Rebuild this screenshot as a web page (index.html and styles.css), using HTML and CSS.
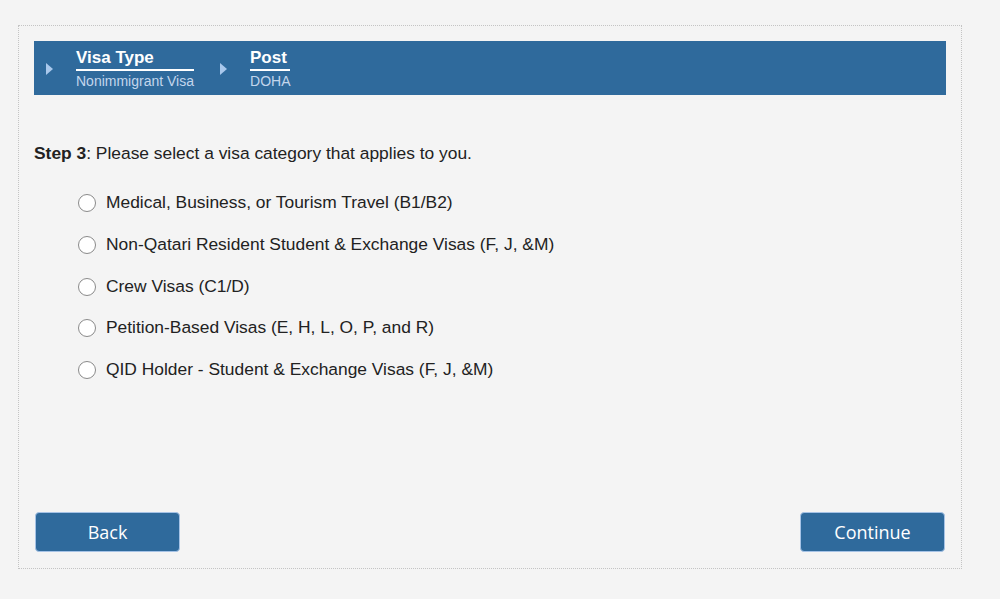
FILE: index.html
```html
<!DOCTYPE html>
<html lang="en">
<head>
    <meta charset="UTF-8">
    <meta name="viewport" content="width=device-width, initial-scale=1.0">
    <title>Visa Category</title>
    <link rel="stylesheet" href="styles.css">
</head>
<body>
    <div class="wizard">
        <div class="crumbs">
            <div class="crumb">
                <span class="arrow"></span>
                <div class="crumb-text">
                    <div class="crumb-title">Visa Type</div>
                    <div class="crumb-value">Nonimmigrant Visa</div>
                </div>
            </div>
            <div class="crumb">
                <span class="arrow"></span>
                <div class="crumb-text">
                    <div class="crumb-title">Post</div>
                    <div class="crumb-value">DOHA</div>
                </div>
            </div>
        </div>

        <p class="step"><b>Step 3</b>: Please select a visa category that applies to you.</p>

        <div class="options">
            <label class="option"><input type="radio" name="cat"><span>Medical, Business, or Tourism Travel (B1/B2)</span></label>
            <label class="option"><input type="radio" name="cat"><span>Non-Qatari Resident Student &amp; Exchange Visas (F, J, &amp;M)</span></label>
            <label class="option"><input type="radio" name="cat"><span>Crew Visas (C1/D)</span></label>
            <label class="option"><input type="radio" name="cat"><span>Petition-Based Visas (E, H, L, O, P, and R)</span></label>
            <label class="option"><input type="radio" name="cat"><span>QID Holder - Student &amp; Exchange Visas (F, J, &amp;M)</span></label>
        </div>

        <div class="actions">
            <button class="btn">Back</button>
            <button class="btn">Continue</button>
        </div>
    </div>
</body>
</html>
```

FILE: styles.css
```css
body {
    margin: 0;
    background: #f4f4f4;
    font-family: 'Liberation Sans', Arial, sans-serif;
    color: #222;
}
.wizard {
    box-sizing: border-box;
    width: 944px;
    height: 544px;
    margin: 25px 0 0 18px;
    padding: 15px 15px 16px 15px;
    border: 1px dotted #c4c4c4;
    display: flex;
    flex-direction: column;
}
.crumbs {
    background: #2f6a9c;
    height: 54px;
    display: flex;
    align-items: center;
    padding-left: 12px;
    gap: 26px;
}
.crumb {
    display: flex;
    align-items: center;
}
.arrow {
    width: 0;
    height: 0;
    border-top: 6px solid transparent;
    border-bottom: 6px solid transparent;
    border-left: 7px solid #a9c8ec;
    margin-right: 23px;
    margin-top: 2px;
}
.crumb-title {
    color: #fff;
    font-size: 17px;
    font-weight: bold;
    line-height: 20px;
    padding-bottom: 1px;
    border-bottom: 2px solid #fff;
    margin-top: -2px;
}
.crumb-value {
    color: #c3d6ec;
    font-size: 14px;
    line-height: 18px;
    margin-top: 1px;
    margin-bottom: -3px;
}
.step {
    margin: 49px 0 0 0;
    font-size: 17.4px;
    line-height: 18px;
}
.options {
    display: flex;
    flex-direction: column;
    gap: 21.8px;
    margin-top: 30px;
    padding-left: 44px;
}
.option {
    display: flex;
    align-items: center;
    font-size: 17.4px;
    line-height: 20px;
}
.option input {
    appearance: none;
    width: 18px;
    height: 18px;
    margin: 2px 10px 0 0;
    border: 1px solid #8a8a8a;
    border-radius: 50%;
    background: #fff;
}
.actions {
    margin-top: auto;
    display: flex;
    justify-content: space-between;
    padding: 0 1px;
}
.btn {
    width: 145px;
    height: 40px;
    background: #2f6a9c;
    color: #fff;
    border: 1px solid #a6c3e6;
    border-radius: 4px;
    font-family: 'Open Sans', sans-serif;
    font-size: 18px;
    cursor: pointer;
}
.btn:hover {
    background: #2a5f8c;
}
```
